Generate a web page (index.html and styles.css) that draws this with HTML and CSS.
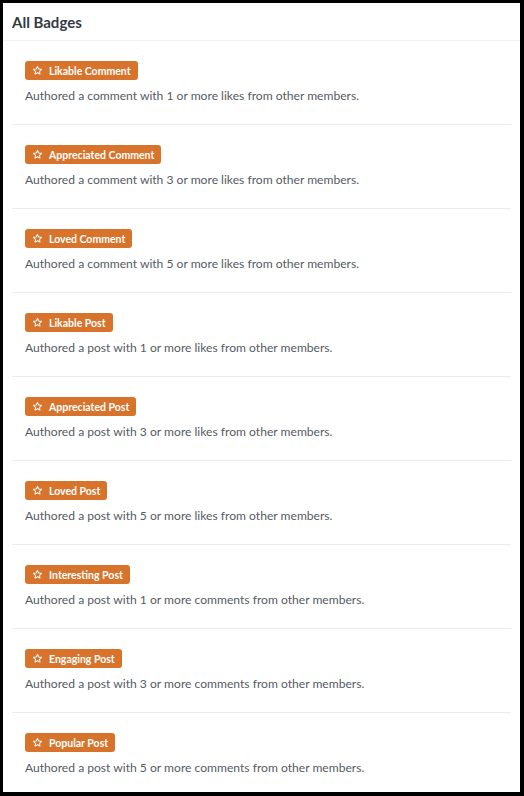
FILE: index.html
```html
<!DOCTYPE html>
<html>
<head>
    <title>All Badges</title>
    <link rel="stylesheet" href="styles.css">
</head>
<body>
    <div class="panel">
        <div class="panel-header">
            <h3>All Badges</h3>
        </div>

        <div class="badge-item">
            <span class="badge"><svg class="star" viewBox="0 0 24 24"><path d="M12 3l2.7 5.6 6.1.9-4.4 4.3 1 6.1L12 17l-5.4 2.9 1-6.1-4.4-4.3 6.1-.9z"/></svg>Likable Comment</span>
            <p>Authored a comment with 1 or more likes from other members.</p>
        </div>
        <div class="badge-item">
            <span class="badge"><svg class="star" viewBox="0 0 24 24"><path d="M12 3l2.7 5.6 6.1.9-4.4 4.3 1 6.1L12 17l-5.4 2.9 1-6.1-4.4-4.3 6.1-.9z"/></svg>Appreciated Comment</span>
            <p>Authored a comment with 3 or more likes from other members.</p>
        </div>
        <div class="badge-item">
            <span class="badge"><svg class="star" viewBox="0 0 24 24"><path d="M12 3l2.7 5.6 6.1.9-4.4 4.3 1 6.1L12 17l-5.4 2.9 1-6.1-4.4-4.3 6.1-.9z"/></svg>Loved Comment</span>
            <p>Authored a comment with 5 or more likes from other members.</p>
        </div>
        <div class="badge-item">
            <span class="badge"><svg class="star" viewBox="0 0 24 24"><path d="M12 3l2.7 5.6 6.1.9-4.4 4.3 1 6.1L12 17l-5.4 2.9 1-6.1-4.4-4.3 6.1-.9z"/></svg>Likable Post</span>
            <p>Authored a post with 1 or more likes from other members.</p>
        </div>
        <div class="badge-item">
            <span class="badge"><svg class="star" viewBox="0 0 24 24"><path d="M12 3l2.7 5.6 6.1.9-4.4 4.3 1 6.1L12 17l-5.4 2.9 1-6.1-4.4-4.3 6.1-.9z"/></svg>Appreciated Post</span>
            <p>Authored a post with 3 or more likes from other members.</p>
        </div>
        <div class="badge-item">
            <span class="badge"><svg class="star" viewBox="0 0 24 24"><path d="M12 3l2.7 5.6 6.1.9-4.4 4.3 1 6.1L12 17l-5.4 2.9 1-6.1-4.4-4.3 6.1-.9z"/></svg>Loved Post</span>
            <p>Authored a post with 5 or more likes from other members.</p>
        </div>
        <div class="badge-item">
            <span class="badge"><svg class="star" viewBox="0 0 24 24"><path d="M12 3l2.7 5.6 6.1.9-4.4 4.3 1 6.1L12 17l-5.4 2.9 1-6.1-4.4-4.3 6.1-.9z"/></svg>Interesting Post</span>
            <p>Authored a post with 1 or more comments from other members.</p>
        </div>
        <div class="badge-item">
            <span class="badge"><svg class="star" viewBox="0 0 24 24"><path d="M12 3l2.7 5.6 6.1.9-4.4 4.3 1 6.1L12 17l-5.4 2.9 1-6.1-4.4-4.3 6.1-.9z"/></svg>Engaging Post</span>
            <p>Authored a post with 3 or more comments from other members.</p>
        </div>
        <div class="badge-item last">
            <span class="badge"><svg class="star" viewBox="0 0 24 24"><path d="M12 3l2.7 5.6 6.1.9-4.4 4.3 1 6.1L12 17l-5.4 2.9 1-6.1-4.4-4.3 6.1-.9z"/></svg>Popular Post</span>
            <p>Authored a post with 5 or more comments from other members.</p>
        </div>
    </div>
</body>
</html>
```

FILE: styles.css
```css
html, body {
    height: 100%;
}

body {
    margin: 0;
    padding: 3px 4px 4px 3px;
    box-sizing: border-box;
    background: #000;
    font-family: Lato, "Open Sans", sans-serif;
}

.panel {
    background: white;
    height: 100%;
    overflow: hidden;
}

.panel-header {
    padding: 0 9px;
    height: 37px;
    border-bottom: 1px solid #eef0f3;
    display: flex;
    align-items: center;
}

.panel-header h3 {
    margin: 0;
    font-size: 15px;
    font-weight: bold;
    color: #333a44;
}

.badge-item {
    margin: 0 9px;
    padding: 19px 13px 0;
    height: 64px;
    border-bottom: 1px solid #e8edf2;
}

.badge-item.last {
    border-bottom: none;
}

.badge {
    display: inline-flex;
    align-items: center;
    height: 19px;
    padding: 0 7px 0 7px;
    background: #d8732c;
    border-radius: 3px;
    color: white;
    font-size: 10.5px;
    font-weight: bold;
}

.star {
    width: 11px;
    height: 11px;
    margin-right: 6px;
    fill: none;
    stroke: white;
    stroke-width: 2.2;
    stroke-linejoin: round;
}

.badge-item p {
    margin: 8px 0 0;
    font-size: 12.1px;
    color: #555b63;
}
```
